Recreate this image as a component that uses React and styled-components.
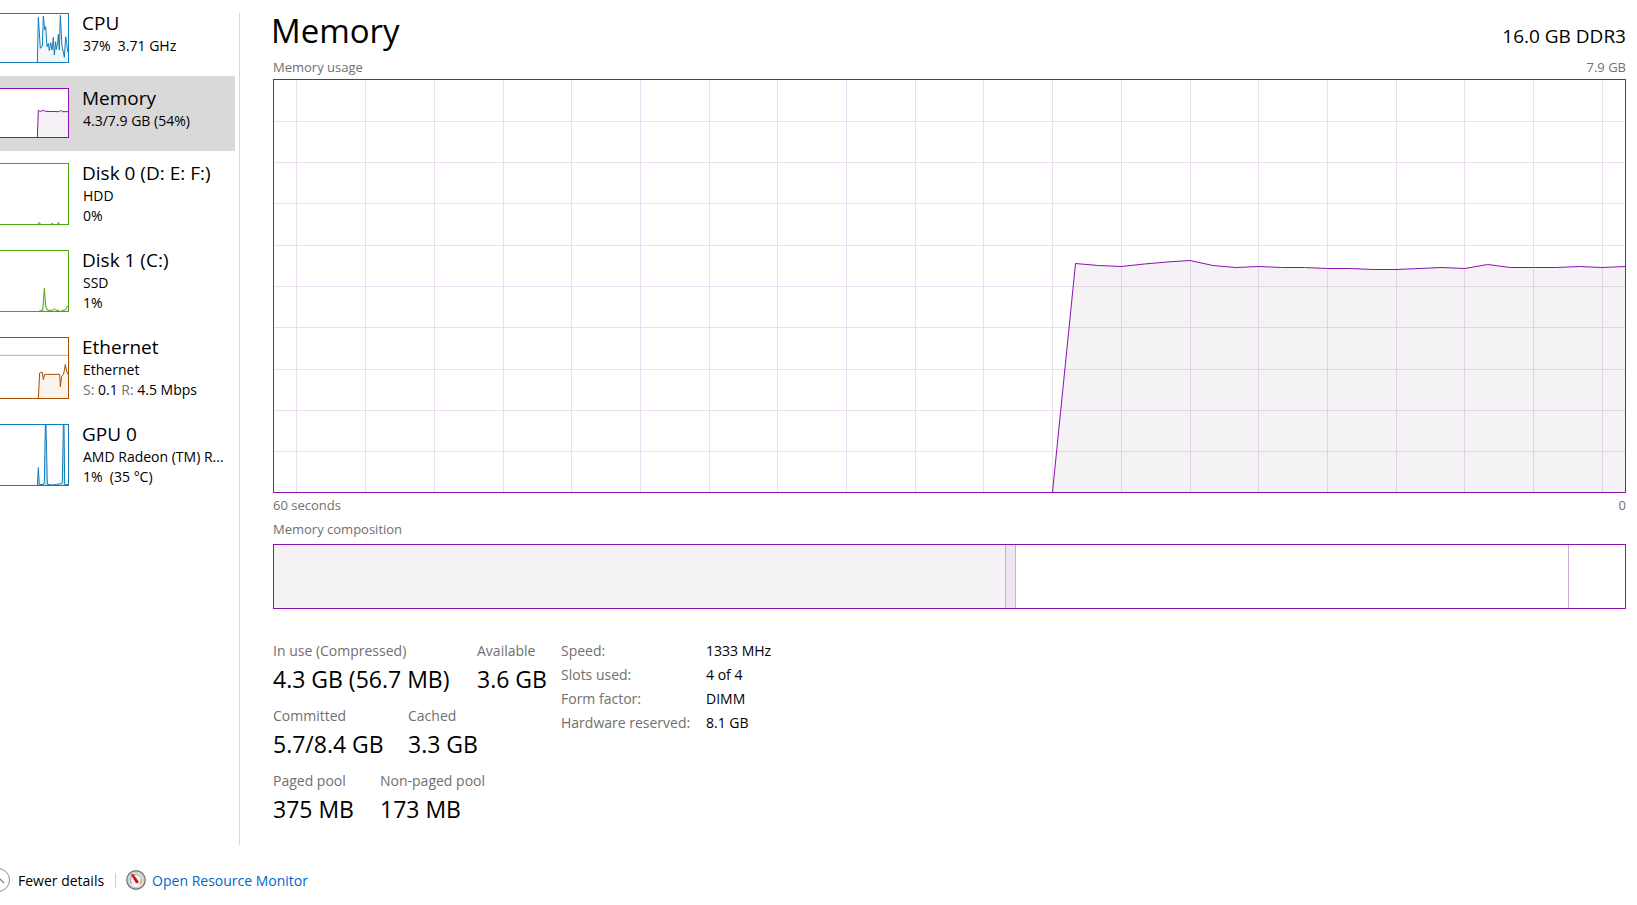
import React, { useState } from "react";
import styled, { createGlobalStyle } from "styled-components";

const GlobalStyle = createGlobalStyle`
  * {
    box-sizing: border-box;
  }
  body {
    margin: 0;
    background: #fff;
    color: #000;
    font-family: "Open Sans", "Noto Sans", sans-serif;
    font-size: 14px;
  }
`

const Shell = styled.div`
  display: flex;
  flex-direction: column;
  min-height: 100vh;
`
const Body = styled.div`
  display: flex;
  flex: 1;
`
const Sidebar = styled.nav`
  flex: 0 0 235px;
  padding-top: 1px;
`
const Divider = styled.div`
  flex: 0 0 1px;
  margin: 13px 33px 0 4px;
  background: #d9d9d9;
`
const DeviceButton = styled.button`
  display: flex;
  gap: 13px;
  width: 100%;
  padding: 10px 0 12px;
  border: 0;
  background: ${props => (props.$active ? "#d9d9d9" : "transparent")};
  color: inherit;
  font: inherit;
  text-align: left;
  cursor: pointer;
`
const Thumb = styled.span`
  flex: 0 0 69px;
  height: ${props => (props.$tall ? 62 : 50)}px;
  margin: 2px 0 1px;
  border: 1px solid ${props => props.$color};
  border-left: 0;
  background: #fff;
`
const Graph = styled.svg`
  display: block;
  width: 100%;
  height: 100%;
`
const DeviceText = styled.span`
  flex: 1;
  min-width: 0;
`
const DeviceName = styled.span`
  display: block;
  margin-bottom: 1px;
  font-size: 19px;
  line-height: 24px;
`
const DeviceLine = styled.span`
  display: block;
  padding-left: 1px;
  line-height: 20px;
  white-space: pre;
`
const Muted = styled.span`
  color: #707070;
`

const Main = styled.main`
  flex: 1;
  min-width: 0;
  padding: 6px 11px 0 0;
`
const Header = styled.header`
  display: flex;
  justify-content: space-between;
  align-items: baseline;
  height: 49px;
  margin-left: -2px;
`
const Title = styled.h1`
  margin: 0;
  font-size: 33px;
  font-weight: 400;
  line-height: 50px;
`
const Capacity = styled.span`
  font-size: 19px;
`
const Caption = styled.div`
  display: flex;
  justify-content: space-between;
  color: #707070;
  font-size: 13px;
  line-height: 24px;
`
const UsageChart = styled.div`
  height: 414px;
  border: 1px solid #8b12ae;
`
const Composition = styled.div`
  display: flex;
  height: 65px;
  margin-top: 3px;
  border: 1px solid #8b12ae;
`
const Segment = styled.div`
  flex: ${props => props.$size} 1 0;
  background: ${props => props.$fill};
  border-right: 1px solid #cbb0d6;

  &:last-child {
    border-right: 0;
  }
`

const Summary = styled.section`
  display: flex;
  margin-top: 30px;
`
const Stats = styled.div`
  display: flex;
  flex-direction: column;
  gap: 9px;
  flex: 0 0 288px;
`
const StatRow = styled.dl`
  display: flex;
  margin: 0;
  white-space: nowrap;
`
const Stat = styled.div`
  flex: 0 0 ${props => (props.$width ? props.$width + "px" : "auto")};
`
const StatLabel = styled.dt`
  color: #707070;
  line-height: 24px;
`
const StatValue = styled.dd`
  margin: 0;
  font-size: 23px;
  line-height: 32px;
`
const Details = styled.table`
  align-self: flex-start;
  border-collapse: collapse;
  line-height: 24px;

  th {
    width: 145px;
    padding: 0;
    color: #707070;
    font-weight: 400;
    text-align: left;
  }
  td {
    padding: 0;
  }
`

const Footer = styled.footer`
  display: flex;
  align-items: center;
  height: 60px;
  padding-top: 10px;
`
const FewerButton = styled.button`
  display: flex;
  align-items: center;
  gap: 7px;
  padding: 0;
  border: 0;
  background: none;
  color: inherit;
  font: inherit;
  cursor: pointer;
`
const FooterRule = styled.span`
  width: 1px;
  height: 15px;
  margin: 0 10px 0 11px;
  background: #d0d0d0;
`
const MonitorLink = styled.a`
  display: flex;
  align-items: center;
  gap: 6px;
  color: #0066cc;
  text-decoration: none;
`

// thumbnail points are in thirds of a pixel
const devices = [
  {
    name: "CPU",
    lines: ["37%  3.71 GHz"],
    color: "#117dbb",
    fill: "#f1f6fa",
    points: "112,146 115,10 121,103 127,96 130,6 134,48 137,38 141,98 145,88 148,110 152,86 156,108 160,70 163,123 167,83 169,106 173,88 175,61 178,108 181,4 186,98 190,113 193,130 197,68 200,88 203,113 206,108 206,146",
  },
  {
    name: "Memory",
    lines: ["4.3/7.9 GB (54%)"],
    color: "#8b12ae",
    fill: "#f4f2f4",
    points: "112,146 115,64 121,67 131,64 136,67 178,68 182,64 187,68 206,68 206,146",
  },
  {
    name: "Disk 0 (D: E: F:)",
    lines: ["HDD", "0%"],
    color: "#4da60c",
    fill: "#eff7e9",
    tall: true,
    points: "112,182 118,175 122,182 153,182 157,177 160,182 172,182 175,175 179,182",
  },
  {
    name: "Disk 1 (C:)",
    lines: ["SSD", "1%"],
    color: "#4da60c",
    fill: "#eff7e9",
    tall: true,
    points: "116,182 121,178 128,178 133,112 137,165 143,178 158,178 163,173 168,178 176,178 180,182 189,178 197,176 201,167 206,164 206,182",
  },
  {
    name: "Ethernet",
    lines: ["Ethernet", <><Muted>S:</Muted> 0.1 <Muted>R:</Muted> 4.5 Mbps</>],
    color: "#a74f01",
    fill: "#fcf3eb",
    tall: true,
    limit: 52,
    points: "115,182 119,105 122,103 127,103 130,125 134,109 179,109 181,146 185,115 190,109 193,98 196,79 200,100 206,112 206,182",
  },
  {
    name: "GPU 0",
    lines: ["AMD Radeon (TM) R...", "1%  (35 °C)"],
    color: "#117dbb",
    fill: "#c5dfee",
    tall: true,
    points: "112,182 115,128 118,179 131,178 133,170 136,0 138,0 142,178 158,180 170,178 185,176 187,170 190,0 192,0 194,179 206,179 206,182",
  },
]

const stats = [
  [
    { label: "In use (Compressed)", value: "4.3 GB (56.7 MB)", width: 204 },
    { label: "Available", value: "3.6 GB" },
  ],
  [
    { label: "Committed", value: "5.7/8.4 GB", width: 135 },
    { label: "Cached", value: "3.3 GB" },
  ],
  [
    { label: "Paged pool", value: "375 MB", width: 107 },
    { label: "Non-paged pool", value: "173 MB" },
  ],
]

const details = [
  ["Speed:", "1333 MHz"],
  ["Slots used:", "4 of 4"],
  ["Form factor:", "DIMM"],
  ["Hardware reserved:", "8.1 GB"],
]

const composition = [
  { name: "In use", size: 733, fill: "#f4f2f4" },
  { name: "Modified", size: 9, fill: "#eee6f1" },
  { name: "Standby", size: 553, fill: "#fff" },
  { name: "Free", size: 56, fill: "#fff" },
]

// one sample a second, starting at second 35 of the window
const usage = [
  183.5, 185.5, 186.5, 184, 182, 180.5, 185.5, 187.5, 186.5, 187.5, 187.5, 188.5, 188.5,
  189.5, 189.5, 188.5, 187.5, 188.5, 184.5, 187.5, 187.5, 187.5, 186.5, 187.5, 186.5,
]
const STEP = 22.9

function Sparkline({ device }) {
  const height = device.tall ? 180 : 144
  return (
    <Thumb $color={device.color} $tall={device.tall}>
      <Graph viewBox={`0 0 204 ${height}`} preserveAspectRatio="none" aria-hidden="true">
        {device.limit && (
          <line x1="0" x2="204" y1={device.limit} y2={device.limit} stroke="#d3a780" strokeWidth="3" />
        )}
        <polyline points={device.points} fill={device.fill} stroke={device.color} strokeWidth="3" />
      </Graph>
    </Thumb>
  )
}

function UsageGraph() {
  const line = usage.map((y, i) => `${(i + 35) * STEP},${y}`).join(" ")
  const columns = Array.from({ length: 20 }, (_, i) => Math.floor((i * 3 + 1) * STEP) + 0.5)
  const rows = Array.from({ length: 9 }, (_, i) => Math.floor((i + 1) * 41.3) + 0.5)

  return (
    <UsageChart>
      <Graph viewBox="0 0 1351 412" preserveAspectRatio="none" role="img" aria-label="Memory usage">
        <g stroke="#ecdef0">
          {columns.map(x => <line key={x} x1={x} x2={x} y1="0" y2="412" />)}
          {rows.map(y => <line key={y} x1="0" x2="1351" y1={y} y2={y} />)}
        </g>
        <polygon points={`778.5,412 ${line} 1351,412`} fill="rgba(70, 40, 70, 0.06)" />
        <polyline points={`778.5,412 ${line}`} fill="none" stroke="#8b12ae" />
      </Graph>
    </UsageChart>
  )
}

function ChevronIcon() {
  return (
    <svg width="11" height="24" viewBox="0 0 11 24" fill="none" aria-hidden="true">
      <circle cx="-2" cy="12" r="11.5" stroke="#8c8c8c" />
      <path d="M-8 15 L-2 9 L4 15" stroke="#8c8c8c" strokeWidth="1.5" />
    </svg>
  )
}

function GaugeIcon() {
  return (
    <svg width="20" height="20" viewBox="0 0 20 20" fill="none" aria-hidden="true">
      <circle cx="10" cy="10" r="9.2" fill="#e4e4e2" stroke="#777b78" strokeWidth="1.4" />
      <circle cx="10" cy="10" r="7.6" fill="#f3f3f1" stroke="#c9cac7" strokeWidth="1" />
      <path d="M5.8 13.8 A5.6 5.6 0 0 1 10 4.4" stroke="#a2a6a2" strokeWidth="1.2" />
      <path d="M10 4.4 A5.6 5.6 0 0 1 15.4 8.6" stroke="#b9bab5" strokeWidth="1.2" />
      <path d="M15.4 8.8 A5.6 5.6 0 0 1 13.8 14" stroke="#e59b6c" strokeWidth="1.4" />
      <path d="M5 4.4 L7 4 L12.6 11.4 L11.6 13.4 L9.6 12.6 Z" fill="#c80d12" />
    </svg>
  )
}

function App() {
  const [selected, setSelected] = useState("Memory")

  return (
    <Shell>
      <GlobalStyle />
      <Body>
        <Sidebar>
          {devices.map(device => (
            <DeviceButton
              key={device.name}
              type="button"
              $active={device.name === selected}
              onClick={() => setSelected(device.name)}
            >
              <Sparkline device={device} />
              <DeviceText>
                <DeviceName>{device.name}</DeviceName>
                {device.lines.map((line, i) => <DeviceLine key={i}>{line}</DeviceLine>)}
              </DeviceText>
            </DeviceButton>
          ))}
        </Sidebar>
        <Divider />
        <Main>
          <Header>
            <Title>Memory</Title>
            <Capacity>16.0 GB DDR3</Capacity>
          </Header>
          <Caption>
            <span>Memory usage</span>
            <span>7.9 GB</span>
          </Caption>
          <UsageGraph />
          <Caption>
            <span>60 seconds</span>
            <span>0</span>
          </Caption>
          <Caption>Memory composition</Caption>
          <Composition>
            {composition.map(part => <Segment key={part.name} $size={part.size} $fill={part.fill} />)}
          </Composition>
          <Summary>
            <Stats>
              {stats.map((row, i) => (
                <StatRow key={i}>
                  {row.map(stat => (
                    <Stat key={stat.label} $width={stat.width}>
                      <StatLabel>{stat.label}</StatLabel>
                      <StatValue>{stat.value}</StatValue>
                    </Stat>
                  ))}
                </StatRow>
              ))}
            </Stats>
            <Details>
              <tbody>
                {details.map(([label, value]) => (
                  <tr key={label}>
                    <th scope="row">{label}</th>
                    <td>{value}</td>
                  </tr>
                ))}
              </tbody>
            </Details>
          </Summary>
        </Main>
      </Body>
      <Footer>
        <FewerButton type="button">
          <ChevronIcon />
          Fewer details
        </FewerButton>
        <FooterRule />
        <MonitorLink href="#">
          <GaugeIcon />
          Open Resource Monitor
        </MonitorLink>
      </Footer>
    </Shell>
  )
}

export default App
